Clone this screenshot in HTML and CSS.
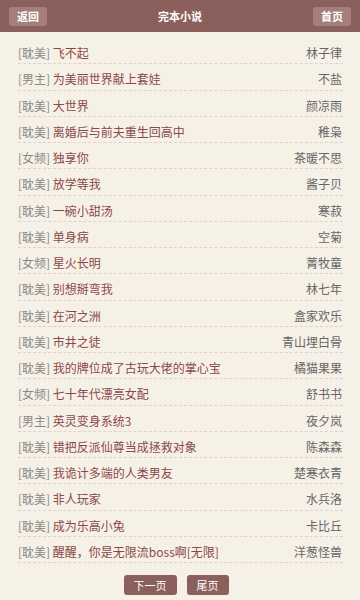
FILE: index.html
```html
<!DOCTYPE html>
<html lang="zh">
<head>
<meta charset="utf-8">
<title>完本小说</title>
<link rel="stylesheet" href="styles.css">
</head>
<body>
<header class="topbar">
  <a class="tb-btn" href="#">返回</a>
  <span class="tb-title">完本小说</span>
  <a class="tb-btn" href="#">首页</a>
</header>
<ul class="list">
  <li class="row"><span class="left"><span class="cat">[耽美]</span> <a class="name" href="#">飞不起</a></span><span class="author">林子律</span></li>
  <li class="row"><span class="left"><span class="cat">[男主]</span> <a class="name" href="#">为美丽世界献上套娃</a></span><span class="author">不盐</span></li>
  <li class="row"><span class="left"><span class="cat">[耽美]</span> <a class="name" href="#">大世界</a></span><span class="author">颜凉雨</span></li>
  <li class="row"><span class="left"><span class="cat">[耽美]</span> <a class="name" href="#">离婚后与前夫重生回高中</a></span><span class="author">稚枭</span></li>
  <li class="row"><span class="left"><span class="cat">[女频]</span> <a class="name" href="#">独享你</a></span><span class="author">茶暖不思</span></li>
  <li class="row"><span class="left"><span class="cat">[耽美]</span> <a class="name" href="#">放学等我</a></span><span class="author">酱子贝</span></li>
  <li class="row"><span class="left"><span class="cat">[耽美]</span> <a class="name" href="#">一碗小甜汤</a></span><span class="author">寒菽</span></li>
  <li class="row"><span class="left"><span class="cat">[耽美]</span> <a class="name" href="#">单身病</a></span><span class="author">空菊</span></li>
  <li class="row"><span class="left"><span class="cat">[女频]</span> <a class="name" href="#">星火长明</a></span><span class="author">菁牧童</span></li>
  <li class="row"><span class="left"><span class="cat">[耽美]</span> <a class="name" href="#">别想掰弯我</a></span><span class="author">林七年</span></li>
  <li class="row"><span class="left"><span class="cat">[耽美]</span> <a class="name" href="#">在河之洲</a></span><span class="author">盒家欢乐</span></li>
  <li class="row"><span class="left"><span class="cat">[耽美]</span> <a class="name" href="#">市井之徒</a></span><span class="author">青山埋白骨</span></li>
  <li class="row"><span class="left"><span class="cat">[耽美]</span> <a class="name" href="#">我的牌位成了古玩大佬的掌心宝</a></span><span class="author">橘猫果果</span></li>
  <li class="row"><span class="left"><span class="cat">[女频]</span> <a class="name" href="#">七十年代漂亮女配</a></span><span class="author">舒书书</span></li>
  <li class="row"><span class="left"><span class="cat">[男主]</span> <a class="name" href="#">英灵变身系统3</a></span><span class="author">夜夕岚</span></li>
  <li class="row"><span class="left"><span class="cat">[耽美]</span> <a class="name" href="#">错把反派仙尊当成拯救对象</a></span><span class="author">陈森森</span></li>
  <li class="row"><span class="left"><span class="cat">[耽美]</span> <a class="name" href="#">我诡计多端的人类男友</a></span><span class="author">楚寒衣青</span></li>
  <li class="row"><span class="left"><span class="cat">[耽美]</span> <a class="name" href="#">非人玩家</a></span><span class="author">水兵洛</span></li>
  <li class="row"><span class="left"><span class="cat">[耽美]</span> <a class="name" href="#">成为乐高小兔</a></span><span class="author">卡比丘</span></li>
  <li class="row"><span class="left"><span class="cat">[耽美]</span> <a class="name" href="#">醒醒，你是无限流boss啊[无限]</a></span><span class="author">洋葱怪兽</span></li>
</ul>
<nav class="pager">
  <a class="pg-btn" href="#">下一页</a>
  <a class="pg-btn" href="#">尾页</a>
</nav>
</body>
</html>
```

FILE: styles.css
```css
html, body {
  margin: 0;
  padding: 0;
}
body {
  background: #f6f1e7;
  font-family: "Noto Sans CJK SC", "Noto Sans", sans-serif;
  font-size: 12px;
  color: #666;
}
a { text-decoration: none; }

.topbar {
  height: 32px;
  background: #8b5f5b;
  display: flex;
  align-items: center;
  justify-content: space-between;
  padding: 0 9px;
}
.tb-btn {
  display: block;
  height: 19px;
  line-height: 19px;
  padding: 0 8px;
  border-radius: 3px;
  background: rgba(255,255,255,0.2);
  color: #fff;
  font-size: 11px;
  font-weight: bold;
}
.tb-title {
  color: #fff;
  font-size: 11px;
  font-weight: bold;
}

.list {
  list-style: none;
  margin: 0;
  padding: 6px 17px 0 18px;
}
.row {
  box-sizing: border-box;
  display: flex;
  justify-content: space-between;
  align-items: center;
  height: 26.25px;
  padding-top: 4px;
  border-bottom: 1px dashed #e8cfcf;
  white-space: nowrap;
}
.cat { color: #888; }
.name { color: #8b4848; }
.author { color: #666; padding-right: 1px; }

.pager {
  display: flex;
  justify-content: center;
  gap: 10px;
  margin-top: 12px;
  padding-right: 8px;
}
.pg-btn {
  display: block;
  height: 20px;
  line-height: 20px;
  padding: 0 10px;
  background: #8b5f5b;
  color: #fff;
  border-radius: 3px;
  font-size: 11px;
}
```
